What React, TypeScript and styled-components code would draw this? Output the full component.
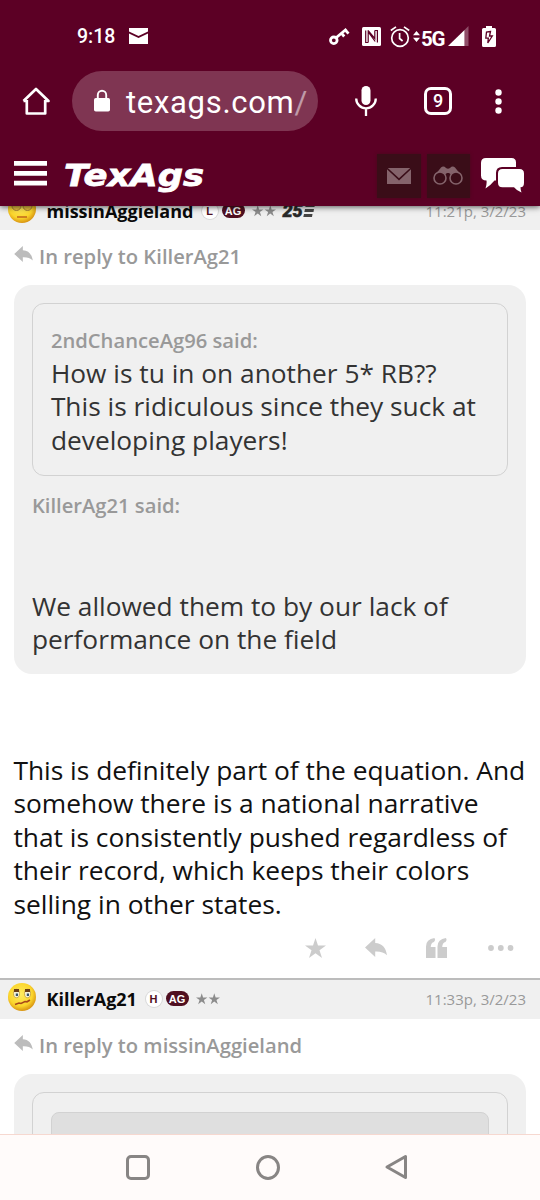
import React from "react";
import styled, { createGlobalStyle } from "styled-components";

const GlobalStyle = createGlobalStyle`
  * { box-sizing: border-box; }
  body { margin: 0; background: #fff; }
  svg { display: block; flex: none; overflow: visible; }
`;

const maroon = "#5c0025";

const Screen = styled.div`
  width: 540px;
  height: 1200px;
  display: flex;
  flex-direction: column;
  overflow: hidden;
  background: #fff;
  font-family: "Open Sans", "Noto Sans", sans-serif;
`;

const StatusBar = styled.div`
  height: 71px;
  padding: 1px 44px 0 77px;
  display: flex;
  align-items: center;
  background: ${maroon};
  color: #fff;
  font-family: Roboto, sans-serif;
`;

const Clock = styled.span`
  width: 52px;
  padding-top: 2px;
  font-size: 19.5px;
  font-weight: 500;
  line-height: 24px;
`;

const StatusIcons = styled.div`
  margin-left: auto;
  display: flex;
  align-items: center;
`;

const Network = styled.span`
  width: 27px;
  margin: 5px 0 0 1px;
  font-size: 20.5px;
  line-height: 20px;
  font-weight: 700;
  letter-spacing: -1.2px;
`;

const BrowserBar = styled.div`
  height: 74px;
  padding: 0 33px 14px 22px;
  display: flex;
  align-items: center;
  background: ${maroon};
  z-index: 2;
`;

const AddressPill = styled.div`
  width: 246px;
  height: 60px;
  margin-left: 21px;
  padding-left: 22px;
  display: flex;
  align-items: center;
  border-radius: 30px;
  background: #7f3552;
  color: #fff;
`;

const Address = styled.span`
  margin: 3px 0 0 16px;
  font-family: Roboto, sans-serif;
  font-size: 31px;
  line-height: 40px;
  letter-spacing: 0.7px;
  white-space: nowrap;
  i { font-style: normal; opacity: 0.5; }
`;

const BarSpacer = styled.span<{ $w: number }>`
  width: ${(p) => p.$w}px;
  flex: none;
`;

const TabCount = styled.div`
  width: 28px;
  height: 28px;
  border: 3px solid #fff;
  border-radius: 7px;
  color: #fff;
  font: 500 18px/22px Roboto, sans-serif;
  text-align: center;
`;

const SiteHeader = styled.header`
  height: 61px;
  flex: none;
  padding: 0 16px 0 14px;
  display: flex;
  align-items: center;
  background: ${maroon};
  box-shadow: 0 1px 6px rgba(0, 0, 0, 0.65);
  z-index: 1;
`;

const MenuButton = styled.div`
  margin: 0 15px 5px 0;
`;

const HeaderTile = styled.div`
  width: 44px;
  height: 44px;
  margin-right: 6px;
  display: flex;
  align-items: center;
  justify-content: center;
  background: #3a0d18;
  box-shadow: 0 0 3px #450a1c;
`;

const Feed = styled.main`
  flex: 1;
  min-height: 0;
  overflow: hidden;
`;

const PostHeader = styled.div<{ $scrolled?: boolean }>`
  height: ${(p) => (p.$scrolled ? 40 : 41)}px;
  margin-top: ${(p) => (p.$scrolled ? -16 : 0)}px;
  padding: 0 14px ${(p) => (p.$scrolled ? 1 : 1)}px 8px;
  display: flex;
  align-items: center;
  background: #f0f0f0;
  border-top: 2px solid #bcbcbc;
`;

const Avatar = styled.div`
  margin-bottom: 3px;
`;

const UserName = styled.span<{ $w: number }>`
  width: ${(p) => p.$w}px;
  margin-left: 10.5px;
  color: #0a0a0a;
  font-size: 18px;
  line-height: 26px;
  font-weight: 700;
  white-space: nowrap;
`;

const Badge = styled.span<{ $solid?: boolean }>`
  width: ${(p) => (p.$solid ? 23 : 16)}px;
  height: ${(p) => (p.$solid ? 15 : 16)}px;
  margin-right: ${(p) => (p.$solid ? 7 : 4)}px;
  border-radius: 9px;
  background: ${(p) => (p.$solid ? "#500f20" : "#fff")};
  box-shadow: ${(p) => (p.$solid ? "none" : "0 0 0 1px #d8d8d8")};
  color: ${(p) => (p.$solid ? "#fff" : "#500f20")};
  font: 700 11px/16px "Liberation Sans", sans-serif;
  text-align: center;
`;

const Rank = styled.span`
  margin-left: 7px;
  display: flex;
  align-items: center;
  color: #292929;
  font: italic 900 18px/20px Roboto, sans-serif;
  -webkit-text-stroke: 0.5px #292929;
`;

const Time = styled.time`
  margin-left: auto;
  color: #999;
  font-size: 15px;
  line-height: 22px;
`;

const ReplyTo = styled.div`
  height: 55px;
  padding: 0 0 3px 14px;
  display: flex;
  align-items: center;
  gap: 6px;
  color: #999;
  font-size: 20.2px;
  font-weight: 600;
  svg { margin-bottom: 4px; }
`;

const Quote = styled.blockquote`
  height: 388.5px;
  margin: 0 13.6px 0 13.5px;
  padding: 18.4px 18.4px 0;
  border-radius: 18px;
  background: #f0f0f0;
  color: #333;
  font-size: 26.3px;
  line-height: 33.6px;
`;

const InnerQuote = styled.div`
  margin-bottom: 12.6px;
  padding: 18.6px 18px 17.8px;
  border: 1.4px solid #d2d2d2;
  border-radius: 12px;
`;

const NestedQuote = styled.div`
  height: 120px;
  border: 1px solid #d2d2d2;
  border-radius: 8px;
  background: #dfdfdf;
`;

const Said = styled.div<{ $nested?: boolean }>`
  height: 33.6px;
  padding-top: ${(p) => (p.$nested ? 1 : 0.4)}px;
  color: #999;
  font-size: 20.2px;
  font-weight: 600;
`;

const Line = styled.div`
  height: 33.6px;
  white-space: nowrap;
`;

const PostBody = styled.div`
  margin: 80px 0 0 13.4px;
  color: #111;
  font-size: 26.35px;
  line-height: 33.6px;
`;

const Actions = styled.div`
  height: 56.5px;
  padding: 0 26px 4px 0;
  display: flex;
  align-items: center;
  justify-content: flex-end;
`;

const NavBar = styled.nav`
  height: 66px;
  flex: none;
  padding: 0 132px 1px 126px;
  display: flex;
  align-items: center;
  justify-content: space-between;
  border-top: 1px solid #f6d8d0;
  background: #fffbfa;
`;

const ReplyIcon = ({ w = 19, h = 16, color = "#bcbcbc" }) => (
  <svg width={w} height={h} viewBox="0 0 22 19" fill={color}>
    <path d="M0 9.400 10.200 0v5C17 5.300 20.800 9.500 22 17.200c-3-3-6.500-4-11.800-3.800V19z" />
  </svg>
);

const star = "M10.500 0 13 7.600h8l-6.500 4.700L17 20l-6.500-4.700L4 20l2.500-7.700L0 7.600h8z";

const Stars = () => (
  <svg width="24" height="12" viewBox="0 0 44 21" fill="#8c8c8c">
    <path d={star} />
    <path transform="translate(23 0)" d={star} />
  </svg>
);

const SleepyFace = () => (
  <svg width="28" height="28" viewBox="1 1 28 28">
    <defs>
      <radialGradient id="face" cx=".45" cy=".4" r=".6">
        <stop offset="0" stopColor="#ffec61" />
        <stop offset=".7" stopColor="#fbd52c" />
        <stop offset="1" stopColor="#d99512" />
      </radialGradient>
    </defs>
    <circle cx="15" cy="15" r="14" fill="url(#face)" />
    <circle cx="9.500" cy="12" r="4.500" fill="#e8bd42" stroke="#a98236" />
    <circle cx="20.500" cy="12" r="4.500" fill="#e8bd42" stroke="#a98236" />
    <path d="M10 23h10" stroke="#c0661b" strokeWidth="1.500" />
  </svg>
);

const ConfusedFace = () => (
  <svg width="28" height="28" viewBox="1 1 28 28">
    <circle cx="15" cy="15" r="14" fill="url(#face)" />
    <g fill="#f5f2d8" stroke="#c19a35" strokeWidth=".8">
      <ellipse cx="9.500" cy="11.500" rx="3" ry="4.200" />
      <ellipse cx="20.500" cy="11.500" rx="3" ry="4.200" />
    </g>
    <path d="M7 7h5v3H7zM18 7h5v3h-5z" fill="#6b3d14" />
    <path d="M8.800 12.800h2.200M19.800 12.800H22" stroke="#38536b" strokeWidth="2.500" />
    <path d="m8 22.500 4-1.500 2 .5 4-2 2 .3 3-1.800" fill="none" stroke="#a8481a" strokeWidth="1.600" />
  </svg>
);

export default function App() {
  return (
    <Screen>
      <GlobalStyle />
      <StatusBar>
        <Clock>9:18</Clock>
        <svg width="19" height="16" viewBox="0 0 19 16" fill="#fff">
          <path d="M0 0h19v3.600L9.500 8 0 3.600zM0 5.500l9.500 4.400L19 5.500V16H0z" />
        </svg>
        <StatusIcons>
          <svg width="21" height="20" viewBox="0 0 21 20" fill="none" stroke="#fff">
            <circle cx="4.800" cy="14.300" r="3.300" strokeWidth="2.800" />
            <path d="M7.400 11.500 17.500 3M12.500 7.200l2.700 3.300M16.300 4l3.200 3.600" strokeWidth="2.800" />
          </svg>
          <BarSpacer $w={12} />
          <svg width="19" height="19" viewBox="0 0 19 19">
            <rect width="19" height="19" rx="1.500" fill="#fff" />
            <path d="M6.200 15.500H3.700v-12M6.200 15.500V5l7 9.500M6 3.500l6.800 8V3.500M12.800 3.500h2.600v12" fill="none" stroke={maroon} strokeWidth="1.200" />
          </svg>
          <BarSpacer $w={9} />
          <svg width="20" height="21" viewBox="0 0 20 21" fill="none" stroke="#fff" strokeWidth="1.700">
            <circle cx="10" cy="12" r="8.300" />
            <path d="M9.600 7v5.500l3 2.500M.8 4.500 6 .9M19.200 4.500 14 .9" />
          </svg>
          <BarSpacer $w={3} />
          <svg width="7" height="11" viewBox="0 0 7 11" fill="#fff">
            <path d="M3.500 0 7 4.300H0zM3.500 11 7 6.700H0z" />
          </svg>
          <Network>5G</Network>
          <svg width="21" height="20" viewBox="0 0 21 20">
            <path d="M16.500 4 20.500 0v20h-4z" fill="#8f4d68" />
            <path d="M16.500 4v16H0z" fill="#fff" />
          </svg>
          <BarSpacer $w={13} />
          <svg width="14" height="21" viewBox="0 0 14 21">
            <path d="M4 0h6v2h2.500Q14 2 14 3.500v16q0 1.500-1.500 1.500h-11Q0 21 0 19.500v-16Q0 2 1.500 2H4z" fill="#fff" />
            <path d="M8.500 5.500 4.500 6 3.800 12.200h2.500L5.800 17l4.500-7H7.500z" fill="none" stroke={maroon} strokeWidth="1.300" />
          </svg>
        </StatusIcons>
      </StatusBar>

      <BrowserBar>
        <svg width="28" height="28" viewBox="0 0 28 28" fill="none" stroke="#fff" strokeWidth="2.700" strokeLinejoin="round">
          <path d="M4.800 13v13.500h18.400V13M1.500 14 14 2l12.500 12h-3.300M1.500 14h3.300" />
        </svg>
        <BarSpacer $w={1} />
        <AddressPill>
          <svg width="16" height="22" viewBox="0 0 16 22">
            <rect y="8" width="16" height="13.500" rx="1.800" fill="#fff" />
            <path d="M3.800 9V5a4.200 4.200 0 0 1 8.400 0v4" fill="none" stroke="#fff" strokeWidth="1.900" />
          </svg>
          <Address>texags.com<i>/</i></Address>
        </AddressPill>
        <BarSpacer $w={37} />
        <svg width="22" height="31" viewBox="0 0 22 31">
          <rect x="6.500" y="0" width="9" height="19" rx="4.500" fill="#fff" />
          <path d="M1.200 12.500a9.800 9.800 0 0 0 19.600 0M11 22v8" fill="none" stroke="#fff" strokeWidth="2.300" />
        </svg>
        <BarSpacer $w={47} />
        <TabCount>9</TabCount>
        <BarSpacer $w={43} />
        <svg width="7" height="25" viewBox="0 0 7 25" fill="#fff">
          <circle cx="3.500" cy="3.500" r="3.200" />
          <circle cx="3.500" cy="12.500" r="3.200" />
          <circle cx="3.500" cy="21.500" r="3.200" />
        </svg>
      </BrowserBar>

      <SiteHeader>
        <MenuButton>
          <svg width="33" height="25" viewBox="0 0 33 25" fill="#fff">
            <path d="M0 0h33v4.800H0zM0 10h33v4.800H0zM0 19.800h33v4.800H0z" />
          </svg>
        </MenuButton>
        <svg width="146" height="44" viewBox="0 0 146 44" fill="#fff" stroke="#fff" strokeWidth="0.8">
          <text x="2" y="32" textLength="140" lengthAdjust="spacingAndGlyphs" fontFamily="DejaVu Sans" fontStyle="italic" fontWeight="700" fontSize="31">TexAgs</text>
        </svg>
        <BarSpacer $w={169} />
        <HeaderTile>
          <svg width="24" height="16" viewBox="0 0 24 16" fill="#84636b">
            <path d="M.8 0h22.400L12 10.300zM0 1.200l12 11.300 12-11.300V16H0z" />
          </svg>
        </HeaderTile>
        <HeaderTile>
          <svg width="30" height="19" viewBox="0 0 30 19">
            <path d="m2 9 6-7.500Q10.500-.5 13 2q2 1.300 4 0 2.500-2.500 5-.5L28 9l-8 1-4-3h-2l-4 3z" fill="#84636b" />
            <circle cx="7" cy="12" r="6" fill="#3a0d18" stroke="#84636b" strokeWidth="1.600" />
            <circle cx="23" cy="12" r="6" fill="#3a0d18" stroke="#84636b" strokeWidth="1.600" />
          </svg>
        </HeaderTile>
        <BarSpacer $w={5} />
        <svg width="43" height="35" viewBox="0 0 43 35" fill="#fff">
          <path d="M5 0h25.500q4.500 0 4.500 4.500V9H21q-6 0-6 6v7.500h-1.500Q9 28 4.500 30.500 6 26 5.500 22.500 0 22.500 0 17.500V5Q0 0 5 0z" />
          <path d="M21.500 11h17Q43 11 43 15.500v9.300q0 4.500-3.500 4.500 0 2.500 1 5.200-4.500-1.500-7.500-5.200H21.500q-4.500 0-4.500-4.500v-9.300q0-4.500 4.500-4.500z" />
        </svg>
      </SiteHeader>

      <Feed>
        <PostHeader $scrolled>
          <Avatar><SleepyFace /></Avatar>
          <UserName $w={155}>missinAggieland</UserName>
          <Badge>L</Badge>
          <Badge $solid>AG</Badge>
          <Stars />
          <Rank>
            25
            <svg width="12" height="13" viewBox="0 0 12 13" fill="#444">
              <path d="M3 0h9l-.5 3H2.300zM2 5h9l-.5 3H1.300zM1 10h8.500L9 13H.3z" />
            </svg>
          </Rank>
          <Time>11:21p, 3/2/23</Time>
        </PostHeader>
        <ReplyTo><ReplyIcon />In reply to KillerAg21</ReplyTo>
        <Quote>
          <InnerQuote>
            <Said $nested>2ndChanceAg96 said:</Said>
            <Line>How is tu in on another 5* RB??</Line>
            <Line>This is ridiculous since they suck at</Line>
            <Line>developing players!</Line>
          </InnerQuote>
          <Said>KillerAg21 said:</Said>
          <Line />
          <Line />
          <Line>We allowed them to by our lack of</Line>
          <Line>performance on the field</Line>
        </Quote>
        <PostBody>
          <Line>This is definitely part of the equation. And</Line>
          <Line>somehow there is a national narrative</Line>
          <Line>that is consistently pushed regardless of</Line>
          <Line>their record, which keeps their colors</Line>
          <Line>selling in other states.</Line>
        </PostBody>
        <Actions>
          <svg width="21" height="20" viewBox="0 0 21 20" fill="#ccc"><path d={star} /></svg>
          <BarSpacer $w={39} />
          <ReplyIcon w={22} h={19} color="#ccc" />
          <BarSpacer $w={39} />
          <svg width="21" height="20" viewBox="0 0 21 20" fill="#ccc">
            <path d="M0 20V8.500Q0 1 8.500 0q1.500 2-.5 4-3 .7-3.300 5H9.500v11zM11.500 20V8.500Q11.500 1 20 0q1.500 2-.5 4-3 .7-3.300 5H21v11z" />
          </svg>
          <BarSpacer $w={41} />
          <svg width="26" height="6" viewBox="0 0 26 6" fill="#ccc">
            <circle cx="3" cy="3" r="2.900" /><circle cx="12.800" cy="3" r="2.900" /><circle cx="22.500" cy="3" r="2.900" />
          </svg>
        </Actions>
        <PostHeader>
          <Avatar><ConfusedFace /></Avatar>
          <UserName $w={99}>KillerAg21</UserName>
          <Badge>H</Badge>
          <Badge $solid>AG</Badge>
          <Stars />
          <Time>11:33p, 3/2/23</Time>
        </PostHeader>
        <ReplyTo><ReplyIcon />In reply to missinAggieland</ReplyTo>
        <Quote>
          <InnerQuote><NestedQuote /></InnerQuote>
        </Quote>
      </Feed>

      <NavBar>
        <svg width="24" height="25" viewBox="0 0 24 25" fill="none" stroke="#888584" strokeWidth="3"><rect x="1.500" y="1.500" width="21" height="22" rx="3.500" /></svg>
        <svg width="24" height="25" viewBox="0 0 24 25" fill="none" stroke="#888584" strokeWidth="3"><ellipse cx="12" cy="12.500" rx="10.500" ry="11" /></svg>
        <svg width="23" height="26" viewBox="0 0 23 26" fill="none" stroke="#888584" strokeWidth="3" strokeLinejoin="round"><path d="M2 13 20.500 2.500v21z" /></svg>
      </NavBar>
    </Screen>
  );
}
